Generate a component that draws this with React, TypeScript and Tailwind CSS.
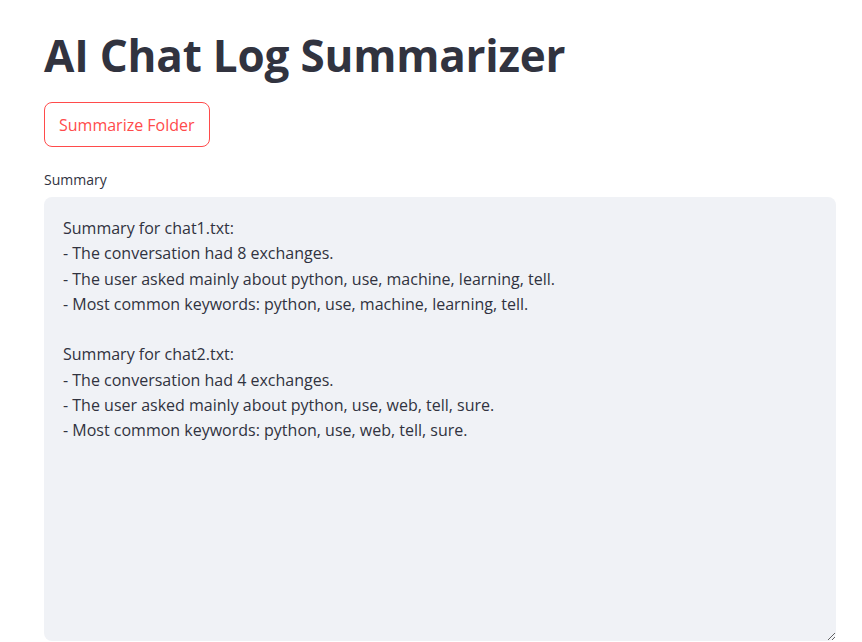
import React from "react";

const summary = `Summary for chat1.txt:
- The conversation had 8 exchanges.
- The user asked mainly about python, use, machine, learning, tell.
- Most common keywords: python, use, machine, learning, tell.

Summary for chat2.txt:
- The conversation had 4 exchanges.
- The user asked mainly about python, use, web, tell, sure.
- Most common keywords: python, use, web, tell, sure.`;

const font = "'Open Sans', 'Liberation Sans', sans-serif";

export default function App() {
  return (
    <div
      className="min-h-[642px] bg-white pl-[44px] pr-[26px] text-[#31333f]"
      style={{ fontFamily: font }}
    >
      <h1 className="pt-[25px] text-[44px] font-bold leading-[60px] tracking-[-0.2px]">
        AI Chat Log Summarizer
      </h1>
      <button className="mt-[17px] h-[45px] rounded-[8px] border border-[#ff4b4b] bg-white px-[14px] text-[16px] text-[#ff4b4b]">
        Summarize Folder
      </button>
      <label className="mt-[24px] block text-[14px] leading-[18px]">Summary</label>
      <textarea
        readOnly
        value={summary}
        className="mt-[8px] block h-[444px] w-full resize-y rounded-[8px] bg-[#f0f2f6] px-[19px] py-[19px] text-[16px] leading-[25.25px] text-[#31333f] outline-none"
        style={{ fontFamily: font }}
      />
    </div>
  );
}
